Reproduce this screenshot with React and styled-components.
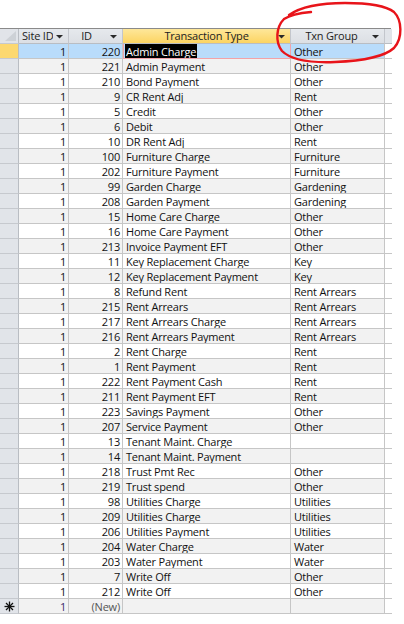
import React from "react";
import styled, { createGlobalStyle, css } from "styled-components";

const Global = createGlobalStyle`
  html, body { margin: 0; padding: 0; background: #ffffff; }
  body { font-family: "Open Sans", "Noto Sans", sans-serif; }
`;

const rows = [
  [220, "Admin Charge", "Other"],
  [221, "Admin Payment", "Other"],
  [210, "Bond Payment", "Other"],
  [9, "CR Rent Adj", "Rent"],
  [5, "Credit", "Other"],
  [6, "Debit", "Other"],
  [10, "DR Rent Adj", "Rent"],
  [100, "Furniture Charge", "Furniture"],
  [202, "Furniture Payment", "Furniture"],
  [99, "Garden Charge", "Gardening"],
  [208, "Garden Payment", "Gardening"],
  [15, "Home Care Charge", "Other"],
  [16, "Home Care Payment", "Other"],
  [213, "Invoice Payment EFT", "Other"],
  [11, "Key Replacement Charge", "Key"],
  [12, "Key Replacement Payment", "Key"],
  [8, "Refund Rent", "Rent Arrears"],
  [215, "Rent Arrears", "Rent Arrears"],
  [217, "Rent Arrears Charge", "Rent Arrears"],
  [216, "Rent Arrears Payment", "Rent Arrears"],
  [2, "Rent Charge", "Rent"],
  [1, "Rent Payment", "Rent"],
  [222, "Rent Payment Cash", "Rent"],
  [211, "Rent Payment EFT", "Rent"],
  [223, "Savings Payment", "Other"],
  [207, "Service Payment", "Other"],
  [13, "Tenant Maint. Charge", ""],
  [14, "Tenant Maint. Payment", ""],
  [218, "Trust Pmt Rec", "Other"],
  [219, "Trust spend", "Other"],
  [98, "Utilities Charge", "Utilities"],
  [209, "Utilities Charge", "Utilities"],
  [206, "Utilities Payment", "Utilities"],
  [204, "Water Charge", "Water"],
  [203, "Water Payment", "Water"],
  [7, "Write Off", "Other"],
  [212, "Write Off", "Other"],
];

const COLS = "19px 50px 54px 168px 94px 7px";

const Page = styled.div`
  position: relative;
  width: 404px;
  height: 624px;
  padding-top: 28px;
  box-sizing: border-box;
  overflow: hidden;
`;

const Sheet = styled.div`
  width: 391px;
  border-top: 1px solid #8a8a8a;
  font-size: 11px;
  letter-spacing: -0.2px;
  color: #111;
`;

const Row = styled.div`
  display: grid;
  grid-template-columns: ${COLS};
  height: 15px;
  background: ${(p) => (p.$selected ? "#b9dcfb" : p.$alt ? "#f2f2f2" : "#ffffff")};
`;

const HeaderRow = styled(Row)`
  background: #e1e4e9;
`;

const Cell = styled.div`
  box-sizing: border-box;
  height: 15px;
  border-right: 1px solid #c6c6c6;
  border-bottom: 1px solid #c6c6c6;
  line-height: 15px;
  white-space: nowrap;
  overflow: hidden;
  padding: 0 ${(p) => (p.$num ? "2px" : "3px")};
  text-align: ${(p) => (p.$num ? "right" : "left")};
  color: ${(p) => p.$color || "inherit"};
  ${(p) =>
    p.$current &&
    css`
      border: 1px solid #f2a3a8;
      border-top: none;
      padding-left: 1px;
    `}
`;

const Tail = styled.div`
  height: 15px;
  box-sizing: border-box;
  border-bottom: 1px solid #c6c6c6;
  background: #ffffff;
`;

const Selector = styled.div`
  box-sizing: border-box;
  height: 15px;
  border-right: 1px solid #b9bdc3;
  border-bottom: 1px solid #c6c9ce;
  background: ${(p) => (p.$current ? "#fcd870" : "#e1e4e9")};
  display: flex;
  align-items: center;
  justify-content: center;
`;

const HeadCell = styled.div`
  position: relative;
  box-sizing: border-box;
  height: 15px;
  border-right: 1px solid #c3c6cc;
  border-bottom: 1px solid #b9bdc3;
  line-height: 14px;
  white-space: nowrap;
  overflow: hidden;
  color: #222;
  padding-right: ${(p) => p.$padR ?? 14}px;
  padding-left: ${(p) => p.$padL || 0}px;
  text-align: ${(p) => p.$align || "center"};
  background: ${(p) =>
    p.$active ? "linear-gradient(#fee79a, #fcd462)" : "linear-gradient(#e6e9ed, #dcdfe4)"};
`;

const Label = styled.span`
  display: inline-block;
  overflow: hidden;
  vertical-align: top;
  max-width: ${(p) => (p.$max ? `${p.$max}px` : "none")};
`;

const HeadTail = styled.div`
  height: 15px;
  box-sizing: border-box;
  border-bottom: 1px solid #b9bdc3;
  background: #e1e4e9;
`;

const Arrow = styled.svg`
  position: absolute;
  right: 5px;
  top: 6px;
`;

const Highlight = styled.span`
  background: #000000;
  color: #ffffff;
  padding: 0 1px;
`;

const Annotation = styled.svg`
  position: absolute;
  left: 0;
  top: 0;
  pointer-events: none;
`;

const DropArrow = () => (
  <Arrow width="7" height="4" viewBox="0 0 7 4">
    <polygon points="0,0 7,0 3.5,3.5" fill="#2a2a2a" />
  </Arrow>
);

const Corner = () => (
  <svg width="18" height="14" viewBox="0 0 18 14">
    <polygon points="16,2 16,12 5,12" fill="#cdd1d6" />
  </svg>
);

const Star = () => (
  <svg width="11" height="11" viewBox="0 0 11 11">
    <g stroke="#111" strokeWidth="1.3">
      <line x1="5.5" y1="0.5" x2="5.5" y2="10.5" />
      <line x1="0.5" y1="5.5" x2="10.5" y2="5.5" />
      <line x1="2" y1="2" x2="9" y2="9" />
      <line x1="9" y1="2" x2="2" y2="9" />
    </g>
  </svg>
);

export default function App() {
  return (
    <>
      <Global />
      <Page>
        <Sheet>
          <HeaderRow>
            <Selector>
              <Corner />
            </Selector>
            <HeadCell $align="left" $padL={3}>
              <Label $max={32}>Site ID</Label>
              <DropArrow />
            </HeadCell>
            <HeadCell $padR={18}>
              <Label>ID</Label>
              <DropArrow />
            </HeadCell>
            <HeadCell $active $padR={0}>
              <Label>Transaction Type</Label>
              <DropArrow />
            </HeadCell>
            <HeadCell $padR={12}>
              <Label>Txn Group</Label>
              <DropArrow />
            </HeadCell>
            <HeadTail />
          </HeaderRow>
          {rows.map(([id, type, group], i) => (
            <Row key={i} $selected={i === 0} $alt={i % 2 === 1}>
              <Selector $current={i === 0} />
              <Cell $num>1</Cell>
              <Cell $num>{id}</Cell>
              {i === 0 ? (
                <Cell $current>
                  <Highlight>{type}</Highlight>
                </Cell>
              ) : (
                <Cell>{type}</Cell>
              )}
              <Cell>{group}</Cell>
              <Tail />
            </Row>
          ))}
          <Row $alt>
            <Selector>
              <Star />
            </Selector>
            <Cell $num $color="#3a2a6a">1</Cell>
            <Cell $num $color="#555">(New)</Cell>
            <Cell />
            <Cell />
            <Tail />
          </Row>
        </Sheet>
        <Annotation width="404" height="80" viewBox="0 0 404 80">
          <path
            d="M311,12 C300,13 290,15 284,19 C276,27 275,42 282,51 C291,60 310,63 335,62 C360,61 384,57 394,48 C403,38 402,20 394,12 C385,5 365,3 345,3 C322,3 302,6 289,15"
            fill="none"
            stroke="#e8141a"
            strokeWidth="2.4"
            strokeLinecap="round"
          />
        </Annotation>
      </Page>
    </>
  );
}
